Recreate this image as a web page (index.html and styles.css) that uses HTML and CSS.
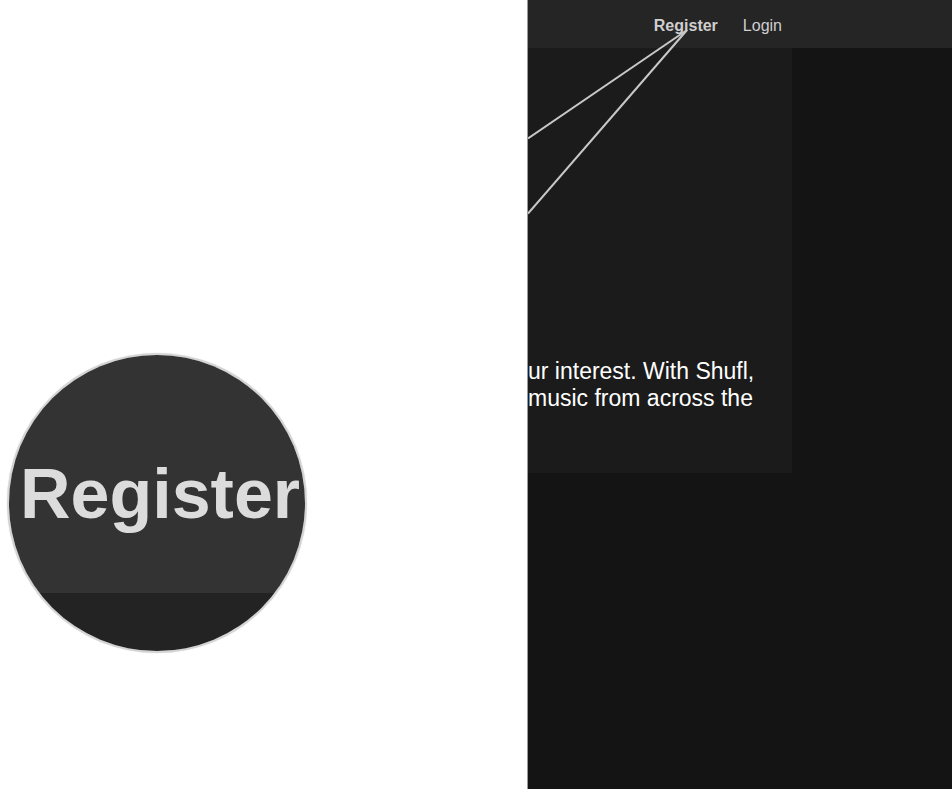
FILE: index.html
```html
<!DOCTYPE html>
<html lang="en">
<head>
<meta charset="utf-8">
<title>Shufl</title>
<link rel="stylesheet" href="styles.css">
</head>
<body>
<div class="layout">
  <aside class="sidebar">
    <div class="magnifier">
      <div class="mag-top"><span class="mag-text">Register</span></div>
      <div class="mag-bottom"></div>
    </div>
  </aside>
  <main class="page">
    <header class="topbar">
      <nav class="nav">
        <a class="nav-link nav-strong" href="#">Register</a>
        <a class="nav-link" href="#">Login</a>
      </nav>
    </header>
    <section class="panel">
      <p class="intro">ur interest. With Shufl,<br>music from across the</p>
    </section>
    <svg class="pointer" width="424" height="789" viewBox="0 0 424 789" aria-hidden="true">
      <line x1="159" y1="30" x2="0" y2="138.5" />
      <line x1="159" y1="30" x2="0" y2="213.5" />
    </svg>
  </main>
</div>
</body>
</html>
```
FILE: styles.css
```css
html, body {
  margin: 0;
  padding: 0;
  height: 100%;
}
body {
  font-family: "Liberation Sans", Arial, sans-serif;
  background: #141414;
  overflow: hidden;
}
.layout {
  display: flex;
  height: 789px;
}
.sidebar {
  width: 528px;
  flex: 0 0 528px;
  box-sizing: border-box;
  background: #ffffff;
  border-right: 1px solid #9a9a9a;
  position: relative;
  z-index: 2;
}
.magnifier {
  position: absolute;
  left: 7px;
  top: 353px;
  width: 300px;
  height: 300px;
  box-sizing: border-box;
  border: 2px solid #d4d4d4;
  border-radius: 50%;
  overflow: hidden;
  display: flex;
  flex-direction: column;
  box-shadow: 0 0 1px rgba(0,0,0,0.25);
}
.mag-top {
  height: 238px;
  flex: 0 0 238px;
  box-sizing: border-box;
  background: #333333;
  padding: 104px 0 0 11px;
}
.mag-text {
  display: block;
  font-weight: bold;
  font-size: 70px;
  line-height: 70px;
  color: #dcdcdc;
  white-space: nowrap;
}
.mag-bottom {
  flex: 1;
  background: #232323;
}
.page {
  flex: 1;
  position: relative;
  overflow: hidden;
  background: #141414;
  display: flex;
  flex-direction: column;
}
.topbar {
  height: 48px;
  flex: 0 0 48px;
  background: #252525;
}
.nav {
  width: 264px;
  height: 48px;
  box-sizing: border-box;
  display: flex;
  justify-content: flex-end;
  align-items: center;
  gap: 25px;
  padding: 4px 10px 0 0;
}
.nav-link {
  font-size: 16px;
  color: #cfcfcf;
  text-decoration: none;
}
.nav-strong {
  font-weight: bold;
}
.panel {
  width: 264px;
  height: 425px;
  box-sizing: border-box;
  background: #1b1b1b;
  padding-top: 310px;
  overflow: hidden;
}
.intro {
  margin: 0;
  font-size: 23px;
  line-height: 27px;
  color: #ffffff;
  white-space: nowrap;
}
.pointer {
  position: absolute;
  left: 0;
  top: 0;
  pointer-events: none;
}
.pointer line {
  stroke: #c8c8c8;
  stroke-width: 2;
}
```
